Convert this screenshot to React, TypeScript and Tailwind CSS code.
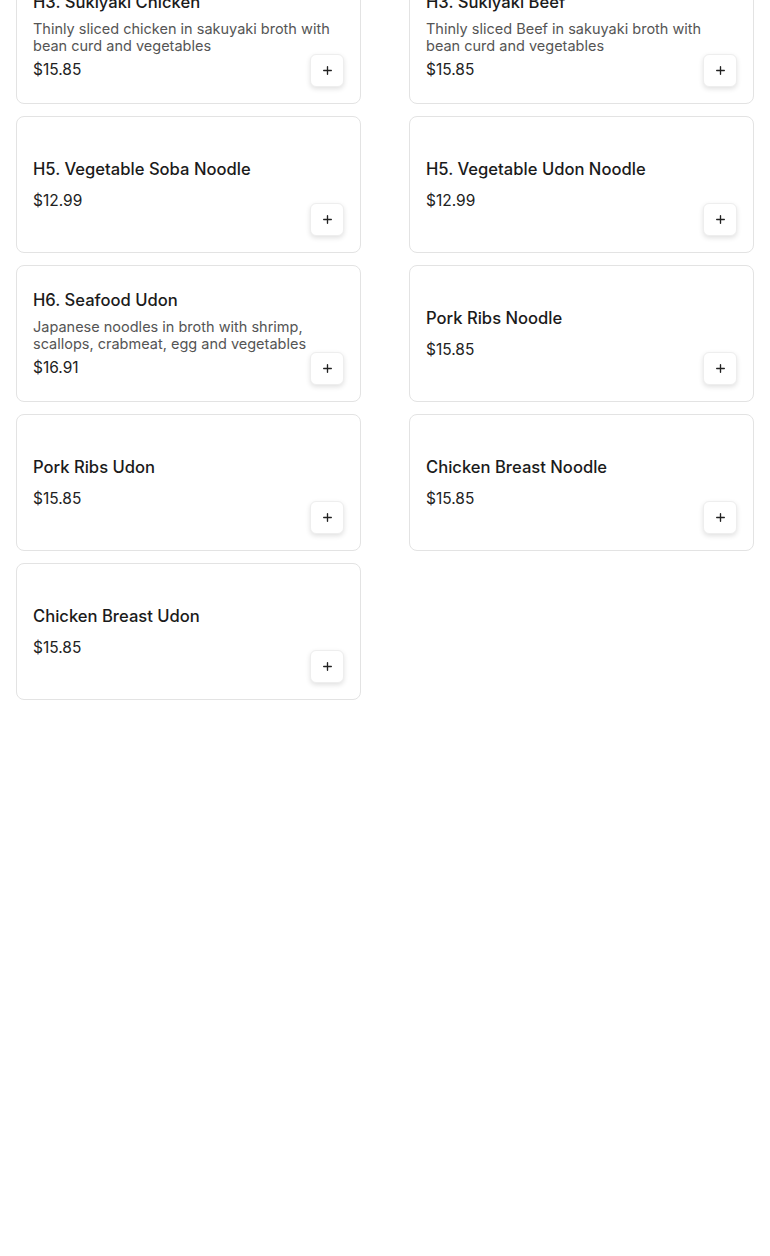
import { Plus } from "lucide-react";

type Dish = {
  name: string;
  description?: string;
  price: string;
};

const dishes: Dish[] = [
  {
    name: "H3. Sukiyaki Chicken",
    description: "Thinly sliced chicken in sakuyaki broth with bean curd and vegetables",
    price: "$15.85",
  },
  {
    name: "H3. Sukiyaki Beef",
    description: "Thinly sliced Beef in sakuyaki broth with bean curd and vegetables",
    price: "$15.85",
  },
  { name: "H5. Vegetable Soba Noodle", price: "$12.99" },
  { name: "H5. Vegetable Udon Noodle", price: "$12.99" },
  {
    name: "H6. Seafood Udon",
    description: "Japanese noodles in broth with shrimp, scallops, crabmeat, egg and vegetables",
    price: "$16.91",
  },
  { name: "Pork Ribs Noodle", price: "$15.85" },
  { name: "Pork Ribs Udon", price: "$15.85" },
  { name: "Chicken Breast Noodle", price: "$15.85" },
  { name: "Chicken Breast Udon", price: "$15.85" },
];

function DishCard({ dish }: { dish: Dish }) {
  return (
    <div className="relative flex h-[137px] items-center rounded-lg border border-[#e3e3e3] bg-white px-4">
      <div className="w-full">
        <h3 className="text-[16.6px] leading-6 font-medium text-[#1b1b1b]">{dish.name}</h3>
        {dish.description && (
          <p className="mt-1.5 text-[14.5px] leading-[17px] text-[#555]">{dish.description}</p>
        )}
        <p className={`text-[15.5px] leading-6 text-[#222] ${dish.description ? "mt-1" : "mt-2"}`}>
          {dish.price}
        </p>
      </div>
      <button className="absolute right-4 bottom-4 flex h-[33px] w-[34px] items-center justify-center rounded-md border border-[#eee] bg-white shadow-[0_2px_5px_rgba(0,0,0,0.12)]">
        <Plus size={13} strokeWidth={2.5} className="text-[#222]" />
      </button>
    </div>
  );
}

export default function App() {
  return (
    <div className="h-[1256px] overflow-hidden bg-white px-4 font-['Inter',sans-serif]">
      <div className="-mt-[33px] grid grid-cols-2 gap-x-12 gap-y-3">
        {dishes.map((dish) => (
          <DishCard key={dish.name} dish={dish} />
        ))}
      </div>
    </div>
  );
}
